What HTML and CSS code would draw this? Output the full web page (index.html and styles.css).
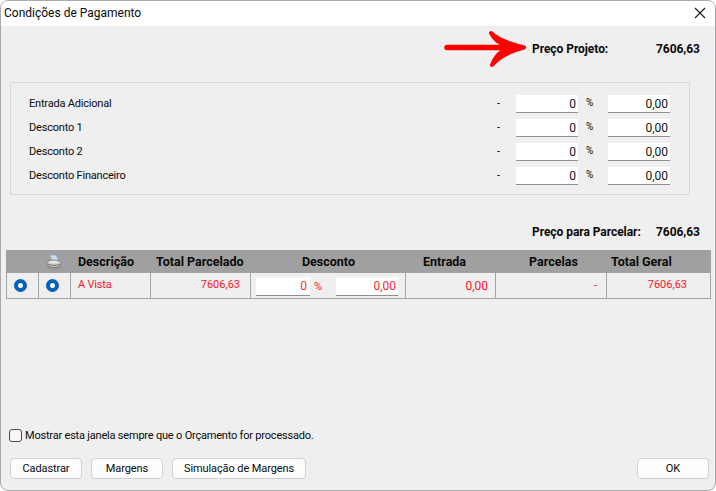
FILE: index.html
```html
<!DOCTYPE html>
<html lang="pt">
<head>
<meta charset="utf-8">
<title>Condições de Pagamento</title>
<link rel="stylesheet" href="styles.css">
</head>
<body>
<div class="window">
  <header class="titlebar">
    <span class="title">Condições de Pagamento</span>
    <svg class="close" width="12" height="12" viewBox="0 0 12 12"><path d="M1 1l10 10M11 1L1 11" stroke="#1a1a1a" stroke-width="1.1" fill="none"/></svg>
  </header>
  <main class="content">
    <div class="price price-top">
      <svg class="arrow" width="84" height="38" viewBox="0 0 84 38">
        <path d="M3 17.5H66" stroke="#fe0000" stroke-width="5.500" stroke-linecap="round" fill="none"/>
        <path d="M47 3C53 9 66 14 80 17.5C66 21 54 28 48 35C51 27 55 22 62 19V16C55 13 50 9 47 3Z" fill="#fe0000" stroke="#fe0000" stroke-width="4" stroke-linejoin="round"/>
      </svg>
      <span class="price-label">Preço Projeto:</span>
      <span class="price-value">7606,63</span>
    </div>

    <section class="panel">
      <div class="form-row">
        <span class="form-label">Entrada Adicional</span><span class="dash">-</span>
        <span class="field">0</span><span class="pct">%</span><span class="field">0,00</span>
      </div>
      <div class="form-row">
        <span class="form-label">Desconto 1</span><span class="dash">-</span>
        <span class="field">0</span><span class="pct">%</span><span class="field">0,00</span>
      </div>
      <div class="form-row">
        <span class="form-label">Desconto 2</span><span class="dash">-</span>
        <span class="field">0</span><span class="pct">%</span><span class="field">0,00</span>
      </div>
      <div class="form-row">
        <span class="form-label">Desconto Financeiro</span><span class="dash">-</span>
        <span class="field">0</span><span class="pct">%</span><span class="field">0,00</span>
      </div>
    </section>

    <div class="price price-bottom">
      <span class="price-label">Preço para Parcelar:</span>
      <span class="price-value">7606,63</span>
    </div>

    <section class="table">
      <div class="thead">
        <span></span>
        <span class="th-icon">
          <svg width="16" height="16" viewBox="0 0 16 16">
            <path d="M4 1h6l2.500 5.500H6z" fill="#cddcf3" stroke="#8aa0c4" stroke-width=".7"/>
            <path d="M1 8.500C2 6.500 5 6 8 6s6 .5 7 2.500V11c-1 2.800-4 4-7 4s-6-1.200-7-4z" fill="#d2d2d2" stroke="#6c6c6c" stroke-width=".7"/>
            <path d="M1.500 10c3 1.800 10 1.800 13 0M2 12.200c3 1.600 9 1.600 12 0" stroke="#5e5e5e" stroke-width=".9" fill="none"/>
            <path d="M4 8h7" stroke="#f4f4f4" stroke-width="1.200"/>
          </svg>
        </span>
        <span class="th th-desc">Descrição</span>
        <span class="th th-total">Total Parcelado</span>
        <span class="th th-desconto">Desconto</span>
        <span class="th th-entrada">Entrada</span>
        <span class="th th-parcelas">Parcelas</span>
        <span class="th th-geral">Total Geral</span>
      </div>
      <div class="tbody">
        <span class="cell cell-radio"><span class="radio"></span></span>
        <span class="cell cell-radio"><span class="radio"></span></span>
        <span class="cell cell-desc">A Vista</span>
        <span class="cell cell-right pad-total">7606,63</span>
        <span class="cell cell-discount">
          <span class="field field-red field-a">0</span><span class="pct pct-red">%</span><span class="field field-red field-b">0,00</span>
        </span>
        <span class="cell cell-right pad-entrada">0,00</span>
        <span class="cell cell-right pad-parcelas">-</span>
        <span class="cell cell-right pad-geral">7606,63</span>
      </div>
    </section>

    <label class="check">
      <span class="checkbox"></span>
      <span>Mostrar esta janela sempre que o Orçamento for processado.</span>
    </label>

    <footer class="actions">
      <button class="btn">Cadastrar</button>
      <button class="btn">Margens</button>
      <button class="btn btn-wide">Simulação de Margens</button>
      <button class="btn btn-ok">OK</button>
    </footer>
  </main>
</div>
</body>
</html>
```
FILE: styles.css
```css
* { box-sizing: border-box; }
html, body { margin: 0; padding: 0; width: 716px; height: 491px; overflow: hidden; background: #fff; }
body { font-family: "Roboto", "Noto Sans", sans-serif; font-size: 11px; letter-spacing: -0.2px; color: #0a0a0a; }

.window {
  width: 716px; height: 491px;
  display: flex; flex-direction: column;
  background: #efefef;
  border: 1px solid #a9a9a9;
  border-radius: 8px;
  overflow: hidden;
}
.titlebar {
  height: 25px; flex: none;
  background: #fff;
  display: flex; align-items: center; justify-content: space-between;
  padding: 0 9px 2px 3px;
}
.title { font-size: 12px; letter-spacing: 0; }
.content { flex: 1; position: relative; display: flex; flex-direction: column; padding: 0 5px 0 5px; }

.price { display: flex; align-items: center; font-weight: 700; font-size: 12px; letter-spacing: -0.05px; height: 16px; }
.price-top { margin-top: 15px; padding-left: 526px; }
.price-bottom { margin-top: 29px; padding-left: 526px; }
.price-label { flex: none; width: 124px; }
.arrow { position: absolute; left: 443px; top: 4px; }

.panel {
  margin: 25px 20px 0 4px;
  height: 113px;
  border: 1px solid #d9d9d9;
  padding: 12px 19px 0 18px;
  display: flex; flex-direction: column; gap: 6px;
}
.form-row { display: flex; align-items: center; height: 18px; }
.form-label { flex: 1; padding-bottom: 2px; }
.dash { width: 19px; padding-bottom: 2px; }
.field {
  width: 62px; height: 18px; flex: none;
  background: #fff;
  border-bottom: 1px solid #8f8f8f;
  text-align: right;
  padding: 0 2px 0 0;
  font-size: 12px; line-height: 19px; letter-spacing: 0;
  color: #141414;
}
.pct { width: 30px; text-align: left; padding: 0 0 3px 8px; flex: none; font-size: 10px; letter-spacing: 0; }

.table { margin-top: 10px; width: 705px; }
.thead, .tbody {
  display: grid;
  grid-template-columns: 32px 32px 80px 100px 155px 90px 111px 1fr;
}
.thead { height: 23px; background: #a0a0a0; align-items: center; font-weight: 700; }
.th { white-space: nowrap; font-size: 12.5px; letter-spacing: 0; }
.th-icon { display: flex; justify-content: center; align-items: center; padding-right: 1px; }
.th-icon svg { display: block; }
.th-desc { padding-left: 8px; }
.th-total { padding-left: 6px; margin-right: -20px; }
.th-desconto { padding-left: 52px; }
.th-entrada { padding-left: 18px; }
.th-parcelas { padding-left: 34px; }
.th-geral { padding-left: 5px; }
.tbody { height: 26px; border: 1px solid #a3a3a3; border-top: 0; }
.cell { border-right: 1px solid #a3a3a3; display: flex; align-items: center; color: #f5152b; min-width: 0; }
.cell:last-child { border-right: 0; }
.cell-radio { justify-content: center; padding-right: 4px; }
.radio { width: 13px; height: 13px; border-radius: 50%; border: 4px solid #0063b8; background: #fff; }
.cell-desc { padding-left: 7px; padding-bottom: 3px; }
.cell-right { justify-content: flex-end; letter-spacing: 0; }
.pad-total { padding-right: 10px; padding-bottom: 3px; }
.pad-entrada { padding-right: 7px; font-size: 12px; }
.pad-parcelas { padding-right: 9px; }
.pad-geral { padding-right: 23px; padding-bottom: 3px; }
.cell-discount { padding: 1px 0 0 5px; }
.field-red { color: #fb2a30; }
.field-a { width: 54px; height: 19px; padding-right: 3px; }
.field-b { width: 62px; height: 19px; }
.pct-red { color: #f5152b; width: 26px; padding: 0 0 0 4px; font-size: 11px; }

.check { display: flex; align-items: center; gap: 3px; margin-top: 129px; margin-left: 3px; height: 14px; }
.checkbox { width: 13px; height: 13px; border: 1px solid #4a4a4a; border-radius: 3px; background: #f6f6f6; }

.actions { display: flex; gap: 9px; margin-top: 16px; margin-left: 4px; margin-right: 1px; }
.btn {
  height: 21px; width: 72px; padding: 0;
  font: inherit; letter-spacing: -0.1px; color: #0a0a0a;
  background: #fdfdfd;
  border: 1px solid #d0d0d0;
  border-radius: 4px;
}
.btn-wide { width: 134px; }
.btn-ok { margin-left: auto; }
```
